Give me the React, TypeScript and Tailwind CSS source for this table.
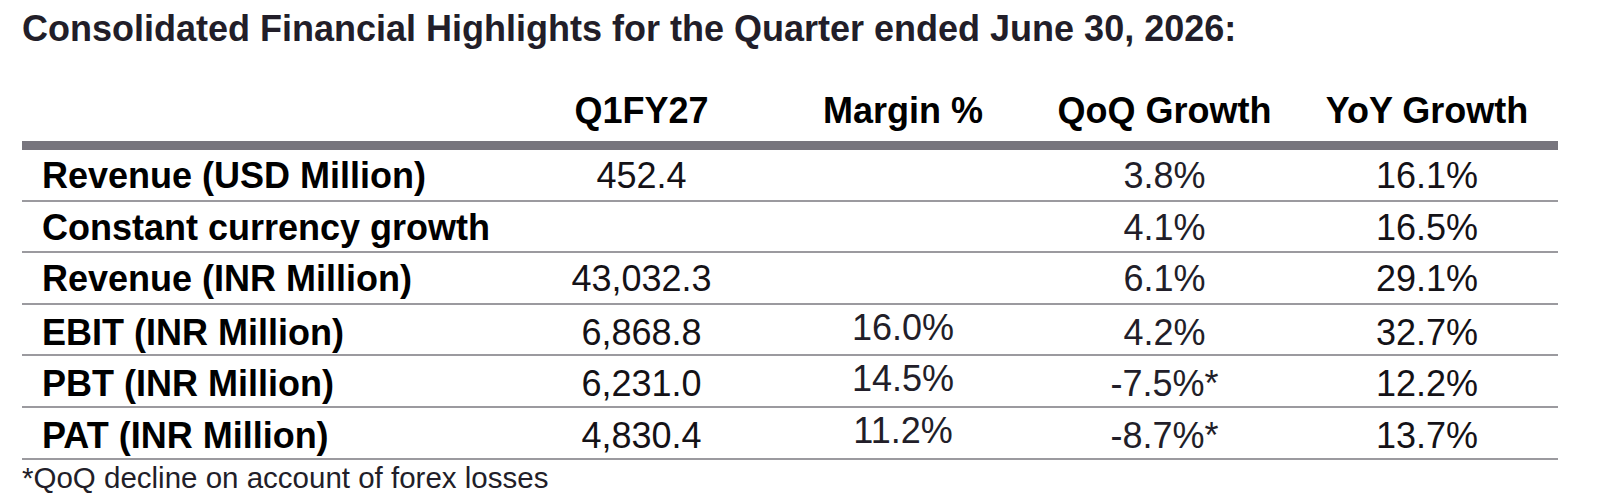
const rows = [
  { label: "Revenue (USD Million)", q1: "452.4", margin: "", qoq: "3.8%", yoy: "16.1%" },
  { label: "Constant currency growth", q1: "", margin: "", qoq: "4.1%", yoy: "16.5%" },
  { label: "Revenue (INR Million)", q1: "43,032.3", margin: "", qoq: "6.1%", yoy: "29.1%" },
  { label: "EBIT (INR Million)", q1: "6,868.8", margin: "16.0%", qoq: "4.2%", yoy: "32.7%" },
  { label: "PBT (INR Million)", q1: "6,231.0", margin: "14.5%", qoq: "-7.5%*", yoy: "12.2%" },
  { label: "PAT (INR Million)", q1: "4,830.4", margin: "11.2%", qoq: "-8.7%*", yoy: "13.7%" },
];

const cols = "grid grid-cols-[488px_263px_260px_263px_262px]";

export default function App() {
  return (
    <div
      className="w-[1600px] h-[502px] bg-white px-[22px] pt-[8px] text-black"
      style={{ fontFamily: '"Liberation Sans", Arial, Helvetica, sans-serif' }}
    >
      <h1 className="text-[36px] font-bold leading-[42px] text-[#221e29] whitespace-nowrap">
        Consolidated Financial Highlights for the Quarter ended June 30, 2026:
      </h1>

      <div className="w-[1536px]">
        <div className={`${cols} h-[91px] items-end pb-[10px] text-[36px] leading-[40px] font-bold`}>
          <div />
          <div className="text-center">Q1FY27</div>
          <div className="text-center">Margin %</div>
          <div className="text-center">QoQ Growth</div>
          <div className="text-center">YoY Growth</div>
        </div>
        <div className="h-[9px] bg-[#77757d]" />

        {rows.map((r) => (
          <div
            key={r.label}
            className={`${cols} h-[51.6px] items-center border-b-2 border-[#9b9a9f] pt-[3px] text-[36px] leading-[40px]`}
          >
            <div className="pl-[20px] font-bold whitespace-nowrap">{r.label}</div>
            <div className="text-center text-[#141217]">{r.q1}</div>
            <div className="text-center text-[#221e29] pb-[10px]">{r.margin}</div>
            <div className="text-center text-[#221e29]">{r.qoq}</div>
            <div className="text-center text-[#141217]">{r.yoy}</div>
          </div>
        ))}
      </div>

      <p className="mt-[2px] text-[29.5px] leading-[32px] text-[#221e29] whitespace-nowrap">
        *QoQ decline on account of forex losses
      </p>
    </div>
  );
}
